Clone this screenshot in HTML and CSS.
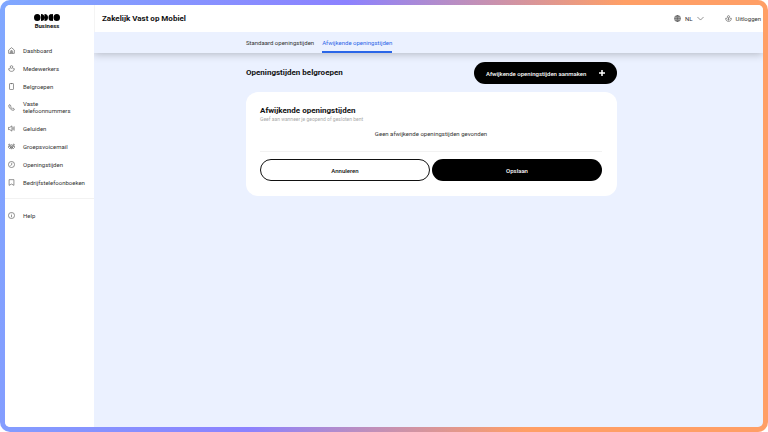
FILE: index.html
```html
<!DOCTYPE html>
<html lang="nl">
<head>
    <meta charset="UTF-8">
    <meta name="viewport" content="width=device-width, initial-scale=1.0">
    <title>Zakelijk Vast op Mobiel</title>
    <link rel="stylesheet" href="styles.css">
</head>
<body>
    <div class="app">
        <aside class="sidebar">
            <a class="logo" href="#">
                <svg viewBox="0 0 52 14" aria-hidden="true">
                    <ellipse cx="6.500" cy="7" rx="6.500" ry="7"/>
                    <path d="M14 0a7 7 0 0 1 0 14zM21 0a7 7 0 0 1 0 14zM35 0v14a6 7 0 0 1 0-14zM38 0v14a5 7 0 0 1 0-14z"/>
                    <ellipse cx="45.500" cy="7" rx="6.500" ry="7"/>
                </svg>
                <span>Business</span>
            </a>
            <nav class="menu">
                <a href="#">
                    <svg class="icon" viewBox="0 0 16 16"><path d="M1.500 7 8 1.500 14.500 7v7.500h-13zM5.500 14.500v-4a2.500 2.500 0 0 1 5 0v4M8 9v5"/></svg>
                    Dashboard
                </a>
                <a href="#">
                    <svg class="icon" viewBox="0 0 16 16"><circle cx="8" cy="4.500" r="3"/><path d="M5 8.500H1.500c0 4 2.500 6 6.500 6s6.500-2 6.500-6H11"/></svg>
                    Medewerkers
                </a>
                <a href="#">
                    <svg class="icon" viewBox="0 0 16 16"><rect x="3.500" y="1" width="9" height="14" rx="1.500"/><path d="M6.500 1.500h3"/></svg>
                    Belgroepen
                </a>
                <a href="#">
                    <svg class="icon" viewBox="0 0 16 16"><path d="M2 2.500 4.500 1.500 7 5 5.500 6.500c.5 1.500 2 3 4 4L11 9l3.500 2.500-1 2.500c-5 2-13-6-11.500-11.500z"/></svg>
                    Vaste<br>telefoonnummers
                </a>
                <a href="#">
                    <svg class="icon" viewBox="0 0 16 16"><path d="M1 5.500h3L9 2v12l-5-3.500H1zM11.500 5v6M14 3v10"/></svg>
                    Geluiden
                </a>
                <a href="#">
                    <svg class="icon" viewBox="0 0 16 16"><circle cx="3" cy="4" r="1.500"/><circle cx="13" cy="4" r="1.500"/><circle cx="8" cy="6" r="2"/><path d="M1 7.500h4l1 3-2 2.500-3-3zM15 7.500h-4l-1 3 2 2.500 3-3zM5.500 10h5L8 14z"/></svg>
                    Groepsvoicemail
                </a>
                <a href="#">
                    <svg class="icon" viewBox="0 0 16 16"><circle cx="8" cy="8" r="7"/><path d="M8.500 4v4.500l-3 2"/></svg>
                    Openingstijden
                </a>
                <a href="#">
                    <svg class="icon" viewBox="0 0 16 16"><path d="M2.500 1.500h11v13L8 11.500l-5.500 3z"/></svg>
                    Bedrijfstelefoonboeken
                </a>
            </nav>
            <nav class="menu help">
                <a href="#">
                    <svg class="icon" viewBox="0 0 16 16"><circle cx="8" cy="8" r="7"/><path d="M8 7v5M8 4v1.500"/></svg>
                    Help
                </a>
            </nav>
        </aside>
        <div class="page">
            <header class="topbar">
                <h1>Zakelijk Vast op Mobiel</h1>
                <div class="actions">
                    <button class="language" type="button">
                        <svg class="icon" viewBox="0 0 16 16"><circle cx="8" cy="8" r="7"/><ellipse cx="8" cy="8" rx="3.500" ry="7"/><path d="M1 8h14M8 1v14M2 4.500h12M2 11.500h12"/></svg>
                        NL
                        <svg class="icon" viewBox="0 0 16 16"><path d="m1 4.500 7 7 7-7"/></svg>
                    </button>
                    <a class="logout" href="#">
                        <svg class="icon" viewBox="0 0 16 16"><circle cx="8" cy="4" r="2.500"/><path d="M5 7.500H1.500c0 4.500 2.500 7 6.500 7s6.500-2.500 6.500-7H11M8 6.500V12M6 10l2 2 2-2"/></svg>
                        Uitloggen
                    </a>
                </div>
            </header>
            <nav class="tabs">
                <a href="#">Standaard openingstijden</a>
                <a class="active" href="#">Afwijkende openingstijden</a>
            </nav>
            <main class="content">
                <div class="title-row">
                    <h2>Openingstijden belgroepen</h2>
                    <button class="btn btn-dark btn-add" type="button">
                        Afwijkende openingstijden aanmaken
                        <svg viewBox="0 0 10 10" aria-hidden="true"><path d="M5 0v10M0 5h10"/></svg>
                    </button>
                </div>
                <section class="card">
                    <h2>Afwijkende openingstijden</h2>
                    <p class="hint">Geef aan wanneer je geopend of gesloten bent</p>
                    <p class="empty">Geen afwijkende openingstijden gevonden</p>
                    <div class="buttons">
                        <button class="btn btn-light" type="button">Annuleren</button>
                        <button class="btn btn-dark" type="button">Opslaan</button>
                    </div>
                </section>
            </main>
        </div>
    </div>
</body>
</html>
```
FILE: styles.css
```css
* {
    margin: 0;
    padding: 0;
    box-sizing: border-box;
}

body {
    min-height: 100vh;
    display: flex;
    background: #fff;
    color: #333;
    font-family: Roboto, "Liberation Sans", sans-serif;
    font-size: 6px;
    line-height: 7px;
}

a {
    color: inherit;
    text-decoration: none;
}

button {
    font: inherit;
    color: inherit;
    border: none;
    background: none;
    cursor: pointer;
}

h1,
h2 {
    color: #111;
    font-size: 8px;
    line-height: 10px;
    font-weight: 700;
}

.icon {
    flex: none;
    width: 7px;
    height: 7px;
    fill: none;
    stroke: #444;
    stroke-width: 1.3;
}

/* gradient frame around the app */
.app {
    flex: 1;
    display: flex;
    border: 5px solid transparent;
    border-radius: 10px;
    background:
        linear-gradient(#ebf1ff, #ebf1ff) padding-box,
        linear-gradient(103deg, #80a8ff, #8c82ff 40%, #ff9f66 72%) border-box;
}

/* sidebar */
.sidebar {
    flex: none;
    width: 89px;
    background: #fff;
    border-radius: 5px 0 0 5px;
}

.logo {
    display: flex;
    flex-direction: column;
    align-items: center;
    padding: 9px 5px 0 0;
    color: #111;
    font-weight: 700;
}

.logo svg {
    width: 26px;
    height: 7px;
    margin-bottom: 1px;
}

.menu {
    display: flex;
    flex-direction: column;
    gap: 10px;
    padding: 17px 3px 12px;
}

.menu a {
    display: grid;
    grid-template-columns: 7px 1fr;
    align-items: center;
    gap: 8px;
    min-height: 8px;
}

.help {
    border-top: 1px solid #f2f2f2;
    padding-top: 12px;
}

/* header */
.page {
    flex: 1;
    min-width: 0;
}

.topbar {
    display: flex;
    align-items: center;
    justify-content: space-between;
    height: 27px;
    padding: 0 2px 0 7px;
    background: #fff;
    border-left: 1px solid #f4f4f4;
    border-radius: 0 5px 0 0;
}

.actions,
.language,
.logout {
    display: flex;
    align-items: center;
}

.actions {
    gap: 21px;
}

.language,
.logout {
    gap: 4px;
}

.tabs {
    display: flex;
    gap: 8px;
    height: 21px;
    padding-left: 152px;
    background: #ebf1ff;
    box-shadow: 0 1px 8px rgba(0, 0, 0, 0.25);
    clip-path: inset(0 0 -12px 0);
}

.tabs a {
    padding-top: 7px;
}

.tabs .active {
    color: #2b66e8;
    border-bottom: 2px solid #2b66e8;
}

/* content */
.content {
    width: 371px;
    max-width: 100%;
    margin-left: 152px;
    padding-top: 9px;
}

.title-row {
    display: flex;
    align-items: center;
    justify-content: space-between;
    margin-bottom: 8px;
}

.btn {
    height: 22px;
    border-radius: 11px;
    font-weight: 500;
}

.btn-dark {
    background: #000;
    color: #fff;
}

.btn-light {
    border: 1px solid #111;
    background: #fff;
    color: #111;
}

.btn-add {
    display: flex;
    align-items: center;
    justify-content: space-between;
    min-width: 143px;
    padding: 0 12px;
}

.btn-add svg {
    width: 6px;
    height: 6px;
    stroke: #fff;
    stroke-width: 2.5;
}

.card {
    padding: 14px 15px 15px 14px;
    border-radius: 12px;
    background: #fff;
}

.hint {
    color: #aaa;
    font-size: 5px;
    line-height: 6px;
}

.empty {
    padding: 8px 0 14px;
    border-bottom: 1px solid #f2f2f2;
    text-align: center;
}

.buttons {
    display: grid;
    grid-template-columns: 1fr 1fr;
    gap: 2px;
    margin-top: 7px;
}
```
